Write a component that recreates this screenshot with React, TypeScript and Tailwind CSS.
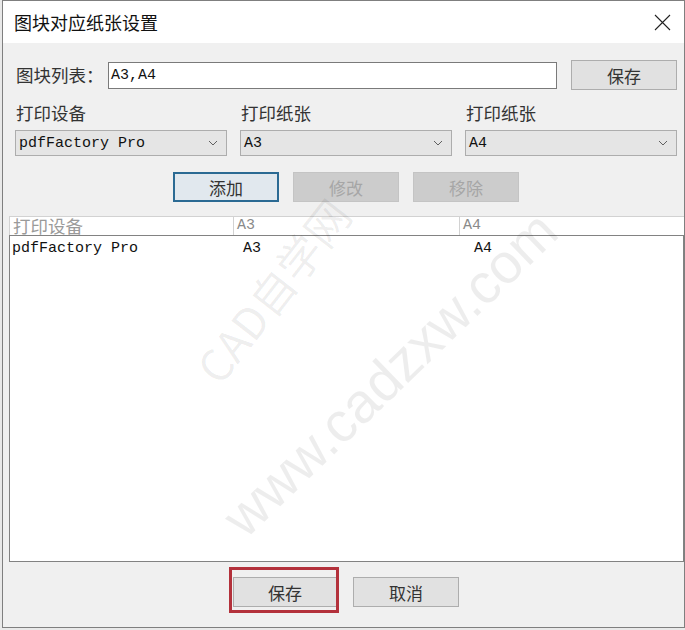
import React from "react";

const cjk = "font-['Noto_Sans_CJK_SC','Noto_Sans',sans-serif]";
const mono = "font-['Liberation_Mono','Noto_Sans_CJK_SC',monospace]";

function Chevron() {
  return (
    <svg width="10" height="6" viewBox="0 0 10 6" className="shrink-0">
      <path d="M1 1 L5 5 L9 1" fill="none" stroke="#606060" strokeWidth="1" />
    </svg>
  );
}

function Select({ value }: { value: string }) {
  return (
    <div className="w-[212px] h-[26px] bg-[#e5e5e5] border border-[#adadad] flex items-center pl-[3px] pr-[8px]">
      <span className={`${mono} text-[15px] leading-none text-[#111] flex-1`}>{value}</span>
      <Chevron />
    </div>
  );
}

function Btn({
  label,
  variant = "normal",
  w = "w-[106px]",
}: {
  label: string;
  variant?: "normal" | "focus" | "disabled";
  w?: string;
}) {
  const base = `${w} h-[30px] flex items-center justify-center ${cjk} text-[17px] leading-none`;
  if (variant === "focus")
    return <div className={`${base} bg-[#e1e8ee] border-2 border-[#2b6a93] text-[#333]`}>{label}</div>;
  if (variant === "disabled")
    return <div className={`${base} bg-[#cccccc] border border-[#c4c4c4] text-[#a6a6a6]`}>{label}</div>;
  return <div className={`${base} bg-[#e1e1e1] border border-[#adadad] text-[#333]`}>{label}</div>;
}

export default function App() {
  return (
    <div className="relative w-[685px] h-[630px] bg-[#e9e9e9] overflow-hidden">
      <div className="ml-[2px] w-[683px] h-[628px] border border-[#7f7f7f] flex flex-col bg-[#f0f0f0]">
        {/* Title bar */}
        <div className="h-[42px] bg-white flex items-center pl-[11px] pr-[13px] shrink-0">
          <span className={`${cjk} text-[18px] leading-none text-[#111] flex-1`}>图块对应纸张设置</span>
          <svg width="17" height="17" viewBox="0 0 17 17">
            <path d="M1 1 L16 16 M16 1 L1 16" stroke="#222" strokeWidth="1.1" fill="none" />
          </svg>
        </div>

        {/* Body */}
        <div className="flex-1 flex flex-col">
          {/* Row 1 */}
          <div className="flex items-center mt-[17px] h-[30px]">
            <span className={`${cjk} text-[17.5px] leading-none text-[#333] ml-[13px] w-[92px]`}>图块列表：</span>
            <div className="w-[449px] h-[27px] bg-white border border-[#7a7a7a] flex items-center pl-[2px]">
              <span className={`${mono} text-[15px] leading-none text-[#111]`}>A3,A4</span>
            </div>
            <div className="ml-[14px]">
              <Btn label="保存" />
            </div>
          </div>

          {/* Labels */}
          <div className="flex ml-[13px] mt-[12px] gap-[13px] h-[22px] items-center">
            <span className={`${cjk} text-[17.5px] leading-none text-[#333] w-[212px]`}>打印设备</span>
            <span className={`${cjk} text-[17.5px] leading-none text-[#333] w-[212px]`}>打印纸张</span>
            <span className={`${cjk} text-[17.5px] leading-none text-[#333] w-[212px]`}>打印纸张</span>
          </div>

          {/* Selects */}
          <div className="flex ml-[12px] mt-[6px] gap-[13px]">
            <Select value="pdfFactory Pro" />
            <Select value="A3" />
            <Select value="A4" />
          </div>

          {/* Action buttons */}
          <div className="flex ml-[170px] mt-[16px] gap-[14px]">
            <Btn label="添加" variant="focus" />
            <Btn label="修改" variant="disabled" />
            <Btn label="移除" variant="disabled" />
          </div>

          {/* List */}
          <div className="ml-[6px] mt-[14px] w-[675px] flex flex-col">
            <div className="h-[19px] bg-white border-t border-l border-[#d2d2d2] flex">
              <div className="w-[224px] border-r border-[#d2d2d2] pl-[3px] flex items-end">
                <span className={`${cjk} text-[17.5px] leading-[19px] text-[#9a9a9a]`}>打印设备</span>
              </div>
              <div className="w-[226px] border-r border-[#d2d2d2] pl-[3px] flex items-end">
                <span className={`${mono} text-[15px] leading-[18px] text-[#8a8a8a]`}>A3</span>
              </div>
              <div className="flex-1 pl-[3px] flex items-end">
                <span className={`${mono} text-[15px] leading-[18px] text-[#8a8a8a]`}>A4</span>
              </div>
            </div>
            <div className="h-[327px] bg-white border border-[#828282]">
              <div className="flex h-[20px] items-center mt-[2px]">
                <span className={`${mono} text-[15px] leading-none text-[#111] pl-[2px] w-[233px]`}>pdfFactory Pro</span>
                <span className={`${mono} text-[15px] leading-none text-[#111] w-[231px]`}>A3</span>
                <span className={`${mono} text-[15px] leading-none text-[#111]`}>A4</span>
              </div>
            </div>
          </div>

          {/* Bottom buttons */}
          <div className="flex ml-[230px] mt-[15px] gap-[16px]">
            <div className="relative">
              <Btn label="保存" w="w-[104px]" />
              <span className="absolute -left-[4px] -top-[10px] -right-[2px] -bottom-[6px] border-[3px] border-[#b3313b] pointer-events-none" />
            </div>
            <Btn label="取消" />
          </div>
        </div>
      </div>

      {/* Watermark */}
      <span
        className={`absolute left-[272px] top-[290px] -translate-x-1/2 -translate-y-1/2 rotate-[-52deg] whitespace-nowrap pointer-events-none ${cjk} text-[44px] leading-none text-black/[0.07]`}
      >
        CAD自学网
      </span>
      <span
        className="absolute left-[390px] top-[374px] -translate-x-1/2 -translate-y-1/2 rotate-[-44deg] whitespace-nowrap pointer-events-none font-['Liberation_Sans',sans-serif] text-[56px] leading-none text-black/[0.07]"
      >
        www.cadzxw.com
      </span>
    </div>
  );
}
